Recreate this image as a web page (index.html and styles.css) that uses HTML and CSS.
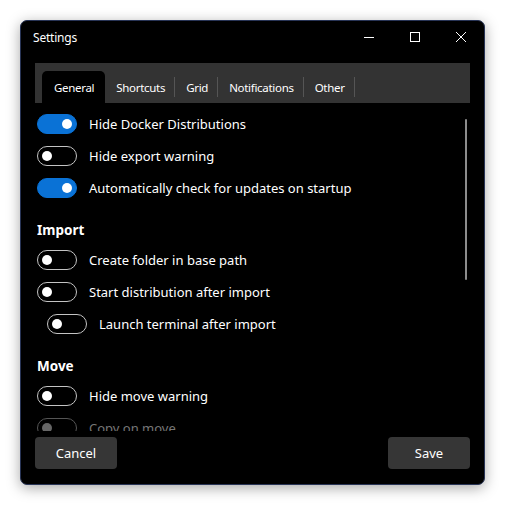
FILE: index.html
```html
<!DOCTYPE html>
<html>
<head>
<meta charset="utf-8">
<link rel="stylesheet" href="styles.css">
</head>
<body>
<div class="window">
  <div class="titlebar">
    <div class="title">Settings</div>
    <div class="controls">
      <div class="ctl"><svg width="10" height="10" viewBox="0 0 10 10"><path d="M0 5.5H10" stroke="#fff" stroke-width="1"/></svg></div>
      <div class="ctl"><svg width="10" height="10" viewBox="0 0 10 10"><rect x="0.5" y="0.5" width="9" height="9" fill="none" stroke="#fff" stroke-width="1"/></svg></div>
      <div class="ctl"><svg width="10" height="10" viewBox="0 0 10 10"><path d="M0 0L10 10M10 0L0 10" stroke="#fff" stroke-width="1"/></svg></div>
    </div>
  </div>
  <div class="main">
    <div class="tabs">
      <div class="tab active">General</div>
      <div class="tab">Shortcuts</div><span class="sep"></span>
      <div class="tab">Grid</div><span class="sep"></span>
      <div class="tab">Notifications</div><span class="sep"></span>
      <div class="tab">Other</div><span class="sep"></span>
    </div>
    <div class="scroll">
      <div class="row"><span class="toggle on"></span><span class="label">Hide Docker Distributions</span></div>
      <div class="row"><span class="toggle"></span><span class="label">Hide export warning</span></div>
      <div class="row"><span class="toggle on"></span><span class="label">Automatically check for updates on startup</span></div>
      <div class="heading">Import</div>
      <div class="row"><span class="toggle"></span><span class="label">Create folder in base path</span></div>
      <div class="row"><span class="toggle"></span><span class="label">Start distribution after import</span></div>
      <div class="row indent"><span class="toggle"></span><span class="label">Launch terminal after import</span></div>
      <div class="heading">Move</div>
      <div class="row"><span class="toggle"></span><span class="label">Hide move warning</span></div>
      <div class="row disabled"><span class="toggle"></span><span class="label">Copy on move</span></div>
      <div class="scrollbar"></div>
    </div>
    <div class="footer">
      <button class="btn">Cancel</button>
      <button class="btn">Save</button>
    </div>
  </div>
</div>
</body>
</html>
```
FILE: styles.css
```css
html, body { margin: 0; padding: 0; background: #fff; }
body { padding: 20px; font-family: "Noto Sans", "Open Sans", sans-serif; color: #fff; }
.window {
  width: 465px; height: 465px; box-sizing: border-box;
  background: #000; border: 1px solid #283456; border-radius: 7px;
  box-shadow: 0 3px 14px rgba(0,0,0,0.35);
  display: flex; flex-direction: column; overflow: hidden;
}
.titlebar { height: 32px; display: flex; align-items: center; flex: none; }
.title { padding-left: 12px; font-size: 12px; letter-spacing: -0.2px; flex: 1; }
.controls { display: flex; height: 32px; }
.ctl { width: 46px; height: 32px; display: flex; align-items: center; justify-content: center; }
.ctl svg { display: block; }
.main { flex: 1; display: flex; flex-direction: column; padding: 0 14px; min-height: 0; }
.tabs {
  margin-top: 10px; height: 40px; background: #333; flex: none;
  display: flex; align-items: flex-end; padding-left: 7px;
}
.tab { height: 32px; display: flex; align-items: center; padding: 0 9px 0 11px; font-size: 11.5px; letter-spacing: -0.3px; }
.tab.active { background: #000; border-radius: 5px 5px 0 0; padding: 0 11px 0 12px; }
.sep { width: 1px; height: 20px; background: #555; margin-bottom: 6px; }
.scroll { flex: 1; overflow: hidden; position: relative; padding-top: 5px; min-height: 0; }
.row { height: 32px; display: flex; align-items: center; padding-left: 2px; font-size: 13px; }
.row.indent { padding-left: 12px; }
.toggle {
  width: 40px; height: 20px; box-sizing: border-box; border-radius: 10px;
  border: 1px solid #c4c4c4; position: relative; flex: none; margin-right: 12px;
}
.toggle::after {
  content: ""; position: absolute; width: 10px; height: 10px; border-radius: 50%;
  background: #fff; left: 4px; top: 4px;
}
.toggle.on { background: #0a72d6; border-color: #0a72d6; }
.toggle.on::after { left: auto; right: 4px; }
.disabled .toggle { border-color: #555; }
.disabled .toggle::after { background: #666; }
.disabled .label { color: #777; }
.heading { font-weight: bold; font-size: 13.5px; height: 20px; line-height: 20px; margin: 16px 0 4px 2px; }
.scrollbar { position: absolute; right: 3px; top: 16px; width: 2px; height: 161px; background: #8c8c8c; border-radius: 1px; }
.footer { height: 53px; flex: none; display: flex; justify-content: space-between; padding-top: 6px; box-sizing: border-box; }
.btn {
  width: 82px; height: 32px; background: #363636; color: #fff; border: none; border-radius: 4px;
  font-family: inherit; font-size: 13px;
}
```
